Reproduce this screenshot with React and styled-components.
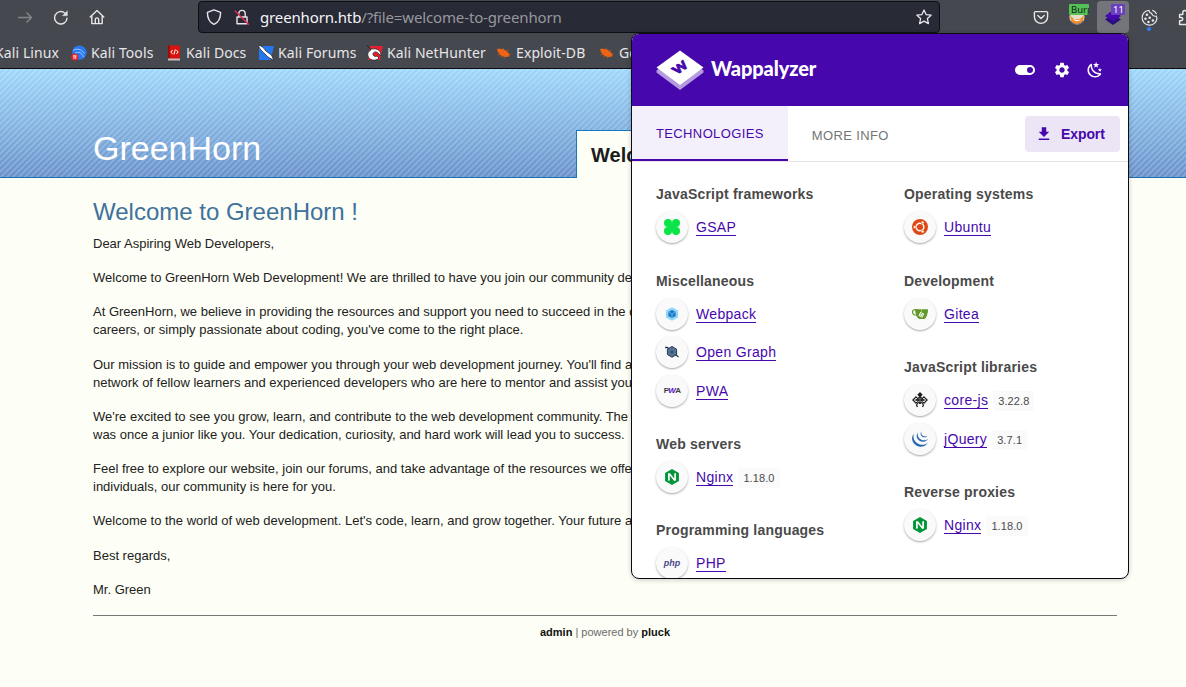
import styled, { createGlobalStyle } from "styled-components";
import { SiNginx, SiGitea, SiJquery } from "react-icons/si";
import { MdDownload, MdSettings } from "react-icons/md";

const GlobalStyle = createGlobalStyle`
  * {
    box-sizing: border-box;
  }

  body {
    margin: 0;
    background: #fdfef5;
  }
`;

const Screen = styled.div`
  position: relative;
  width: 1186px;
  height: 687px;
  overflow: hidden;
  background: #fdfef5;
  font-family: "Liberation Sans", Arial, sans-serif;
`;

/* browser */

const BrowserChrome = styled.div`
  height: 69px;
  background: #46484f;
  border-bottom: 1px solid #0c0c0d;
  font-family: "Noto Sans", sans-serif;
  color: #e6e6e8;
`;

const NavBar = styled.div`
  display: flex;
  align-items: center;
  height: 34px;
`;

const NavButtons = styled.div`
  display: flex;
  flex: none;
  align-items: center;
  gap: 20px;
  width: 198px;
  padding-left: 17px;
`;

const AddressBar = styled.div`
  display: flex;
  flex: none;
  align-items: center;
  width: 742px;
  height: 32px;
  padding: 0 7px;
  background: #282a36;
  border: 1px solid #0e0f14;
  border-radius: 4px;
`;

const ShieldSlot = styled.span`
  display: flex;
  width: 28px;
`;

const LockSlot = styled.span`
  display: flex;
  width: 26px;
`;

const Address = styled.span`
  flex: 1;
  font-size: 15px;
  line-height: 20px;
  letter-spacing: -0.14px;
  color: #97989e;
`;

const Host = styled.span`
  color: #f4f4f6;
`;

const Extensions = styled.div`
  display: flex;
  flex: none;
  align-items: center;
  height: 34px;
  padding-left: 93px;
`;

const ExtensionSlot = styled.div`
  position: relative;
  display: flex;
  flex: none;
  align-items: center;
  justify-content: center;
  width: ${(props) => props.$width}px;
  height: 32px;
  padding-left: ${(props) => props.$indent || 0}px;
  border-radius: 4px;
  background: ${(props) => (props.$active ? "#74757b" : "transparent")};
`;

const ExtensionBadge = styled.span`
  position: absolute;
  top: ${(props) => props.$top}px;
  right: ${(props) => props.$right}px;
  width: ${(props) => props.$width}px;
  height: 11px;
  padding-left: 2px;
  overflow: hidden;
  border-radius: 1px;
  background: ${(props) => props.$color};
  color: ${(props) => props.$text};
  font-size: 9.5px;
  line-height: 11px;
`;

const BookmarksBar = styled.div`
  display: flex;
  align-items: center;
  height: 34px;
  padding-top: 4px;
  margin-left: -5px;
  white-space: nowrap;
`;

const Bookmark = styled.div`
  display: flex;
  align-items: center;
  gap: 4px;
  width: ${(props) => props.$width}px;
  flex: none;
  font-size: 14px;
  line-height: 20px;
  letter-spacing: 0.1px;
`;

/* page */

const SiteHeader = styled.header`
  display: flex;
  justify-content: space-between;
  align-items: flex-end;
  height: 109px;
  padding: 0 69px 0 93px;
  border-bottom: 1px solid #1b6fb3;
  background: repeating-linear-gradient(
      135deg,
      rgba(255, 255, 255, 0.19) 0,
      rgba(255, 255, 255, 0.19) 1.3px,
      transparent 1.9px,
      transparent 3.6px,
      rgba(255, 255, 255, 0.19) 4.24px
    ),
    linear-gradient(#9fd8fb, #6992cb);
`;

const SiteTitle = styled.h1`
  margin: 0 0 9px;
  font-weight: 400;
  font-size: 34px;
  line-height: 40px;
  color: #ffffff;
`;

const SiteTab = styled.div`
  width: 541px;
  height: 48px;
  margin-bottom: -1px;
  padding: 12px 14px;
  background: #fdfef5;
  border: 1px solid #1878bd;
  border-bottom: none;
  font-weight: 700;
  font-size: 20px;
  line-height: 25px;
  color: #1c1c1c;
`;

const Article = styled.main`
  width: 1024px;
  margin: 0 0 0 93px;
  padding-top: 20px;
  font-size: 13px;
  line-height: 18.15px;
  color: #222222;
  white-space: nowrap;
`;

const ArticleTitle = styled.h2`
  margin: 0 0 9px;
  font-weight: 400;
  font-size: 24px;
  line-height: 28px;
  color: #3e729c;
`;

const Paragraph = styled.p`
  margin: 0 0 15.97px;
`;

const Footer = styled.footer`
  padding-top: 8px;
  border-top: 1px solid #777777;
  text-align: center;
  font-size: 11px;
  line-height: 16px;
  color: #6b6b6b;

  b {
    color: #111111;
  }
`;

/* extension popup */

const Popup = styled.section`
  position: absolute;
  top: 33px;
  left: 631px;
  width: 498px;
  height: 546px;
  overflow: hidden;
  background: #ffffff;
  border: 1px solid #0c0c14;
  border-radius: 8px;
  box-shadow: 0 1px 5px rgba(0, 0, 0, 0.2);
`;

const PopupHeader = styled.div`
  display: flex;
  align-items: center;
  height: 72px;
  padding: 0 24px;
  background: #4608ad;
  color: #ffffff;
`;

const BrandName = styled.span`
  flex: 1;
  margin: 0 0 4px 7px;
  font-family: Lato, sans-serif;
  font-weight: 900;
  font-size: 20px;
  line-height: 24px;
  letter-spacing: -0.1px;
`;

const HeaderActions = styled.div`
  display: flex;
  align-items: center;
  gap: 15px;

  svg:first-child {
    margin-right: 1px;
  }
`;

const TabBar = styled.div`
  display: flex;
  align-items: flex-start;
  height: 56px;
  padding-right: 8px;
  border-bottom: 1px solid #e6e6e6;
`;

const Tab = styled.div`
  height: 55px;
  padding: ${(props) => (props.$active ? "0 24px" : "2px 24px 0")};
  background: ${(props) => (props.$active ? "#f4f0fb" : "#ffffff")};
  border-bottom: 2px solid
    ${(props) => (props.$active ? "#4608ad" : "transparent")};
  color: ${(props) => (props.$active ? "#4608ad" : "#757575")};
  font-size: 13px;
  line-height: 56px;
  letter-spacing: 0.37px;
`;

const ExportButton = styled.button`
  display: flex;
  align-items: center;
  gap: 8px;
  width: 95px;
  height: 36px;
  margin: 10px 0 0 auto;
  padding: 0 0 0 10px;
  border: none;
  border-radius: 4px;
  background: #ece5f6;
  color: #4608ad;
  font-family: inherit;
  font-weight: 700;
  font-size: 14px;
  letter-spacing: -0.1px;
`;

const Technologies = styled.div`
  display: grid;
  grid-template-columns: 248px 248px;
  padding: 22.2px 0 0 24px;
`;

const Category = styled.div`
  margin-bottom: 24.05px;
`;

const CategoryName = styled.h3`
  margin: 0 0 4px;
  font-weight: 700;
  font-size: 14px;
  line-height: 20px;
  letter-spacing: 0.2px;
  color: #4a4a4a;
`;

const Technology = styled.div`
  display: flex;
  align-items: center;
  height: 38.4px;
`;

const Avatar = styled.span`
  display: flex;
  align-items: center;
  justify-content: center;
  width: 32px;
  height: 32px;
  margin-right: 8px;
  border-radius: 50%;
  background: #fafafa;
  box-shadow: 0 1px 2px rgba(0, 0, 0, 0.35);
`;

const TechnologyLink = styled.a`
  height: 17px;
  margin-top: 1px;
  border-bottom: 1px solid #4608ad;
  color: #4608ad;
  font-size: 14px;
  line-height: 17px;
  letter-spacing: 0.32px;
`;

const Version = styled.span`
  height: 20px;
  margin: 2px 0 0 5px;
  padding: 0 5px;
  border-radius: 3px;
  background: #fafafa;
  color: #4a4a4a;
  font-size: 11px;
  line-height: 21px;
  letter-spacing: 0.1px;
`;

const WordMark = styled.span`
  font-style: ${(props) => (props.$italic ? "italic" : "normal")};
  font-weight: 700;
  font-size: ${(props) => props.$size}px;
  letter-spacing: ${(props) => props.$spacing}px;
  color: ${(props) => props.$color};

  em {
    font-style: italic;
    color: #5a0fc8;
  }
`;

const Line = ({ size = 16, width = 1.4, children }) => (
  <svg
    width={size}
    height={size}
    viewBox="0 0 16 16"
    fill="none"
    stroke="currentColor"
    strokeWidth={width}
    strokeLinecap="round"
    strokeLinejoin="round"
  >
    {children}
  </svg>
);

const ForwardIcon = () => (
  <svg width="16" height="16" viewBox="0 0 16 16" fill="none" stroke="#85868b">
    <path d="M1 8.5h13M9.5 3.5l5 5-5 5" strokeWidth="1.4" />
  </svg>
);

const ReloadIcon = () => (
  <Line>
    <path d="M14 9.2A6.2 6.2 0 1 1 11.8 4" />
    <path d="M14.4 2v4.8H9.6z" fill="currentColor" strokeWidth="0.4" />
  </Line>
);

const HomeIcon = () => (
  <Line>
    <path d="M1.2 8 8 1.4 14.8 8M2.8 7v7.6h10.4V7M6.3 14.4V10.6a1.7 1.7 0 0 1 3.4 0v3.8" />
  </Line>
);

const ShieldIcon = () => (
  <Line>
    <path d="M8 .9 14.6 3.4c0 6-2 9.8-6.6 12C3.4 13.2 1.4 9.4 1.4 3.4z" />
  </Line>
);

const LockIcon = () => (
  <Line>
    <path d="M3 8h10v6.8H3zM4.8 8V4.6a3.2 3.2 0 0 1 6.4 0V8" />
    <path d="M1.2 2 14.4 15.2" stroke="#e22850" />
  </Line>
);

const StarIcon = () => (
  <Line width={1.3}>
    <path d="m8 1 2.1 4.6 5 .6-3.7 3.4 1 5L8 12.1l-4.4 2.5 1-5L.9 6.2l5-.6z" />
  </Line>
);

const PocketIcon = () => (
  <Line>
    <path d="M2.4 2.6h11.2c.7 0 1 .4 1 1v4.2a6.6 6.6 0 0 1-13.2 0V3.6c0-.6.3-1 1-1z" />
    <path d="M4.8 6.6 8 9.6l3.2-3" />
  </Line>
);

const FoxyIcon = () => (
  <svg width="16" height="16" viewBox="0 0 16 16">
    <circle cx="8" cy="8" r="7.6" fill="#e8dccb" />
    <path d="M1 5.5C3 12 13 12 15 5l-.6 5.5A7 7 0 0 1 2 11z" fill="#f28c28" />
    <path d="M4 10c2 3 6 3 8 0l-3 1.2z" fill="#ffffff" />
    <path d="M2 12a7.4 7.4 0 0 0 12 0" fill="none" stroke="#8a6a50" />
  </svg>
);

const LayersIcon = () => (
  <svg width="18" height="18" viewBox="0 0 18 18">
    <path d="M1 11.5 9 6l8 5.5L9 17z" fill="#28107a" />
    <path d="M1 8 9 2l8 6-8 5.5z" fill="#4608ad" />
  </svg>
);

const CookieIcon = () => (
  <Line size={17} width={1.1}>
    <path d="M7.5 1.2a7 7 0 1 0 7.500 7.800c0-1-.3-1.600-.8-2.200M7.500 1.200c.2 1.800 1 2.600 2.500 2.800.3 1.800 1.500 3 4.200 2.800M11 1.300a7 7 0 0 1 3.500 3.200" />
    <g fill="currentColor" stroke="none">
      <circle cx="5.6" cy="5.4" r="1.2" />
      <circle cx="4.2" cy="9.2" r="1.2" />
      <circle cx="8.2" cy="8.2" r="1.2" />
      <circle cx="7" cy="12.2" r="1.2" />
      <circle cx="11.2" cy="10.8" r="1.2" />
    </g>
  </Line>
);

const CookieDot = styled.i`
  position: absolute;
  left: 18px;
  bottom: 2px;
  width: 4px;
  height: 4px;
  border-radius: 50%;
  background: #2a80ff;
`;

const PuzzleIcon = () => (
  <Line size={17}>
    <path d="M1.5 5.2h3V3.4a1.9 1.9 0 0 1 3.8 0v1.8H13v9.3H1.5v-3.4h1.4a1.6 1.6 0 0 0 0-3.2H1.5z" />
  </Line>
);

const ToolsIcon = () => (
  <svg width="16" height="16" viewBox="0 0 16 16">
    <circle cx="8.4" cy="7.6" r="7.2" fill="#2878f0" />
    <path d="M2 5.5c4-2.5 8-1.5 11.5 3M4 8c3.5-1.5 7-.5 8.5 4" fill="none" stroke="#9cc8ff" />
    <circle cx="3.8" cy="12" r="3.6" fill="#e5252a" />
    <path d="M2 10.8h3.6M3 11v3M4.7 11v3" stroke="#ffffff" strokeWidth=".8" />
  </svg>
);

const DocsIcon = () => (
  <svg width="16" height="16" viewBox="0 0 16 16">
    <path d="M2 .5h12v13H2z" fill="#d9140f" />
    <path d="M2 .5h2v13H2z" fill="#9e0b0b" />
    <path d="M2 13.5h12v2H2z" fill="#d8b8b8" />
    <path d="M6.5 5 4.8 7.2l2 1.8M10.5 5l1.6 2-1.8 2M9.3 4.4 8 9.4" fill="none" stroke="#ffffff" />
  </svg>
);

const ForumsIcon = () => (
  <svg width="16" height="16" viewBox="0 0 16 16">
    <path d="M1 1h15l-3.5 14H1z" fill="#2378f0" />
    <path d="M0 0c4 1 6 3 8 6 2 2 5 3 6 5l2 5c-3-3-6-3-8-6C5 7 2 5 0 0z" fill="#ffffff" stroke="#24262c" strokeWidth=".8" />
  </svg>
);

const NetHunterIcon = () => (
  <svg width="16" height="16" viewBox="0 0 16 16">
    <path d="M3 1h13l-3 14H1z" fill="#e5202e" />
    <path d="M0 0c4 4 1 4 5 4 6-1 9 2 9 7l-3-3c-2-2-5-1-5 1s2 3 4 2l2 2c-4 4-10 2-11-2-1-3 1-5 3-6z" fill="#ffffff" stroke="#24262c" strokeWidth=".8" />
  </svg>
);

const BugIcon = () => (
  <svg width="16" height="16" viewBox="0 0 16 16">
    <path d="M1 4C5 3 9 4 11.5 7c2 1.5 2.5 3 1.5 4.500C9 12.5 5 11.5 3 8.5 2 7 1.5 6 1 4z" fill="#ee6414" />
    <path d="M7 4.5 8 2.5M10 6l2.5-1M12.5 9.5 14.5 9M4 9.5 1.5 10M6 11l-1.500 1.500M9 12 8.2 13.5" stroke="#d95b16" strokeWidth=".6" />
  </svg>
);

const WappalyzerLogo = () => (
  <svg width="48" height="42" viewBox="0 0 48 42">
    <path d="M.5 21.5 24 5l23.5 16.500v2L24 41 .5 23.500z" fill="#b59cde" />
    <path d="M.5 18.5 24 1.500l23.500 17L24 36z" fill="#ffffff" />
    <text
      transform="translate(24 18.5) matrix(.82 -.58 .6 .62 0 0)"
      y="5"
      textAnchor="middle"
      fill="#4608ad"
      stroke="#4608ad"
      strokeWidth=".9"
      fontFamily="Lato, sans-serif"
      fontWeight="900"
      fontSize="14"
    >
      W
    </text>
  </svg>
);

const ToggleIcon = () => (
  <svg width="24" height="24" viewBox="0 0 24 24" fill="currentColor">
    <path d="M17 7H7a5 5 0 0 0 0 10h10a5 5 0 0 0 0-10m0 8a3 3 0 1 1 0-6 3 3 0 0 1 0 6z" />
  </svg>
);

const NightIcon = () => (
  <svg width="18" height="18" viewBox="0 0 24 24" fill="currentColor">
    <path d="M17.75,4.09L15.22,6.03L16.13,9.09L13.5,7.28L10.87,9.09L11.78,6.03L9.25,4.09L12.44,4L13.5,1L14.56,4L17.75,4.09M21.25,11L19.61,12.25L20.2,14.23L18.5,13.06L16.8,14.23L17.39,12.25L15.75,11L17.81,10.95L18.5,9L19.19,10.95L21.25,11M18.97,15.95C19.8,15.87 20.69,17.05 20.16,17.8C19.84,18.25 19.5,18.67 19.08,19.07C15.17,23 8.84,23 4.94,19.07C1.03,15.17 1.03,8.83 4.94,4.93C5.34,4.53 5.76,4.17 6.21,3.85C6.96,3.32 8.14,4.21 8.06,5.04C7.79,7.9 8.75,10.87 10.95,13.06C13.14,15.26 16.1,16.22 18.97,15.95M17.33,17.97C14.5,17.81 11.7,16.64 9.53,14.5C7.36,12.31 6.2,9.5 6.04,6.68C3.23,9.82 3.34,14.64 6.35,17.66C9.37,20.67 14.19,20.78 17.33,17.97Z" />
  </svg>
);

const GsapIcon = () => (
  <svg width="16" height="16" viewBox="0 0 16 16" fill="#0ae448">
    <circle cx="4" cy="4" r="4" />
    <circle cx="12" cy="4" r="4" />
    <circle cx="4" cy="12" r="4" />
    <circle cx="12" cy="12" r="4" />
    <path d="M4 4h8v8H4z" />
  </svg>
);

const WebpackIcon = () => (
  <svg width="16" height="16" viewBox="0 0 16 16">
    <path d="m8 1.2 6 3.4v6.8l-6 3.4-6-3.4V4.6z" fill="#8ed6fb" />
    <path d="m8 4 3.7 2v4L8 12.1 4.3 10V6z" fill="#1c78c0" />
    <path d="M4.3 6 8 8.1 11.7 6M8 8.1v4" fill="none" stroke="#8ed6fb" strokeWidth=".6" />
  </svg>
);

const OpenGraphIcon = () => (
  <svg width="16" height="16" viewBox="0 0 16 16" fill="none" stroke="#2b3a4e">
    <path d="m8 2.5 4.6 2.7v5.3L8 13.2l-4.6-2.7V5.2z" fill="#5c7ea8" />
    <path d="M3.4 8h9.2M8 2.5v10.7M4.5 4.5l7 7M11.5 4.5l-7 7" strokeWidth=".5" />
    <path d="M1 3.5h2.5L5 5M11.5 10.5 14.5 13" strokeWidth="1.3" />
  </svg>
);

const UbuntuIcon = () => (
  <svg width="16" height="16" viewBox="0 0 16 16">
    <circle cx="8" cy="8" r="8" fill="#dd4814" />
    <circle cx="8" cy="8" r="3.8" fill="none" stroke="#ffffff" strokeWidth="1.5" />
    <g fill="#ffffff" stroke="#dd4814" strokeWidth=".6">
      <circle cx="2.7" cy="8" r="1.5" />
      <circle cx="10.6" cy="3.4" r="1.5" />
      <circle cx="10.6" cy="12.6" r="1.5" />
    </g>
  </svg>
);

const CoreJsIcon = () => (
  <svg width="16" height="16" viewBox="0 0 16 16" fill="none" stroke="#1b1b1b">
    <path d="M8 .3 10.5 2.8 8 5.3 5.5 2.8z" fill="#1b1b1b" strokeWidth=".4" />
    <path d="m8 4.5 3.5 3.5L8 11.5 4.5 8zM4 4.8 7.2 8 4 11.2.8 8zM12 4.8 15.2 8 12 11.2 8.8 8z" strokeWidth="1.1" />
    <path d="M2.5 8h3M10.5 8h3M8 5v7M6.5 10.5l-2 2.5 1 2M9.5 10.5l2 2.5-1 2" strokeWidth="1.2" />
  </svg>
);

const leftColumn = [
  { name: "JavaScript frameworks", items: [{ name: "GSAP", icon: <GsapIcon /> }] },
  {
    name: "Miscellaneous",
    items: [
      { name: "Webpack", icon: <WebpackIcon /> },
      { name: "Open Graph", icon: <OpenGraphIcon /> },
      {
        name: "PWA",
        icon: (
          <WordMark $size={8} $spacing={-0.7} $color="#3d3d3d">
            P<em>W</em>A
          </WordMark>
        ),
      },
    ],
  },
  {
    name: "Web servers",
    items: [{ name: "Nginx", version: "1.18.0", icon: <SiNginx size={16} color="#009639" /> }],
  },
  {
    name: "Programming languages",
    items: [
      {
        name: "PHP",
        icon: (
          <WordMark $italic $size={9} $spacing={0} $color="#484c89">
            php
          </WordMark>
        ),
      },
    ],
  },
];

const rightColumn = [
  { name: "Operating systems", items: [{ name: "Ubuntu", icon: <UbuntuIcon /> }] },
  { name: "Development", items: [{ name: "Gitea", icon: <SiGitea size={16} color="#609926" /> }] },
  {
    name: "JavaScript libraries",
    items: [
      { name: "core-js", version: "3.22.8", icon: <CoreJsIcon /> },
      { name: "jQuery", version: "3.7.1", icon: <SiJquery size={16} color="#2a68b4" /> },
    ],
  },
  {
    name: "Reverse proxies",
    items: [{ name: "Nginx", version: "1.18.0", icon: <SiNginx size={16} color="#009639" /> }],
  },
];

const Column = ({ categories }) => (
  <div>
    {categories.map((category) => (
      <Category key={category.name}>
        <CategoryName>{category.name}</CategoryName>
        {category.items.map((item) => (
          <Technology key={item.name}>
            <Avatar>{item.icon}</Avatar>
            <TechnologyLink>{item.name}</TechnologyLink>
            {item.version && <Version>{item.version}</Version>}
          </Technology>
        ))}
      </Category>
    ))}
  </div>
);

const App = () => {
  return (
    <Screen>
      <GlobalStyle />
      <BrowserChrome>
        <NavBar>
          <NavButtons>
            <ForwardIcon />
            <ReloadIcon />
            <HomeIcon />
          </NavButtons>
          <AddressBar>
            <ShieldSlot>
              <ShieldIcon />
            </ShieldSlot>
            <LockSlot>
              <LockIcon />
            </LockSlot>
            <Address>
              <Host>greenhorn.htb</Host>/?file=welcome-to-greenhorn
            </Address>
            <StarIcon />
          </AddressBar>
          <Extensions>
            <ExtensionSlot $width={16}>
              <PocketIcon />
            </ExtensionSlot>
            <ExtensionSlot $width={48} $indent={8}>
              <FoxyIcon />
              <ExtensionBadge $top={3} $right={8} $width={20} $color="#54c258" $text="#10240f">
                Burp
              </ExtensionBadge>
            </ExtensionSlot>
            <ExtensionSlot $width={32} $active>
              <LayersIcon />
              <ExtensionBadge $top={3} $right={4} $width={14} $color="#6b3fc0" $text="#ffffff">
                11
              </ExtensionBadge>
            </ExtensionSlot>
            <ExtensionSlot $width={40}>
              <CookieIcon />
              <CookieDot />
            </ExtensionSlot>
            <ExtensionSlot $width={34}>
              <PuzzleIcon />
            </ExtensionSlot>
          </Extensions>
        </NavBar>
        <BookmarksBar>
          <Bookmark $width={76}>Kali Linux</Bookmark>
          <Bookmark $width={95}>
            <ToolsIcon />
            Kali Tools
          </Bookmark>
          <Bookmark $width={92}>
            <DocsIcon />
            Kali Docs
          </Bookmark>
          <Bookmark $width={109}>
            <ForumsIcon />
            Kali Forums
          </Bookmark>
          <Bookmark $width={129}>
            <NetHunterIcon />
            Kali NetHunter
          </Bookmark>
          <Bookmark $width={103}>
            <BugIcon />
            Exploit-DB
          </Bookmark>
          <Bookmark $width={150}>
            <BugIcon />
            Google Hacking DB
          </Bookmark>
        </BookmarksBar>
      </BrowserChrome>

      <SiteHeader>
        <SiteTitle>GreenHorn</SiteTitle>
        <SiteTab>Welcome</SiteTab>
      </SiteHeader>

      <Article>
        <ArticleTitle>Welcome to GreenHorn !</ArticleTitle>
        <Paragraph>Dear Aspiring Web Developers,</Paragraph>
        <Paragraph>Welcome to GreenHorn Web Development! We are thrilled to have you join our community de</Paragraph>
        <Paragraph>
          At GreenHorn, we believe in providing the resources and support you need to succeed in the d
          <br />
          careers, or simply passionate about coding, you've come to the right place.
        </Paragraph>
        <Paragraph>
          Our mission is to guide and empower you through your web development journey. You'll find a
          <br />
          network of fellow learners and experienced developers who are here to mentor and assist you
        </Paragraph>
        <Paragraph>
          We're excited to see you grow, learn, and contribute to the web development community. The
          <br />
          was once a junior like you. Your dedication, curiosity, and hard work will lead you to success.
        </Paragraph>
        <Paragraph>
          Feel free to explore our website, join our forums, and take advantage of the resources we offe
          <br />
          individuals, our community is here for you.
        </Paragraph>
        <Paragraph>Welcome to the world of web development. Let's code, learn, and grow together. Your future a</Paragraph>
        <Paragraph>Best regards,</Paragraph>
        <Paragraph>Mr. Green</Paragraph>
        <Footer>
          <b>admin</b> | powered by <b>pluck</b>
        </Footer>
      </Article>

      <Popup>
        <PopupHeader>
          <WappalyzerLogo />
          <BrandName>Wappalyzer</BrandName>
          <HeaderActions>
            <ToggleIcon />
            <MdSettings size={18} />
            <NightIcon />
          </HeaderActions>
        </PopupHeader>
        <TabBar>
          <Tab $active>TECHNOLOGIES</Tab>
          <Tab>MORE INFO</Tab>
          <ExportButton>
            <MdDownload size={18} />
            Export
          </ExportButton>
        </TabBar>
        <Technologies>
          <Column categories={leftColumn} />
          <Column categories={rightColumn} />
        </Technologies>
      </Popup>
    </Screen>
  );
};

export default App;
